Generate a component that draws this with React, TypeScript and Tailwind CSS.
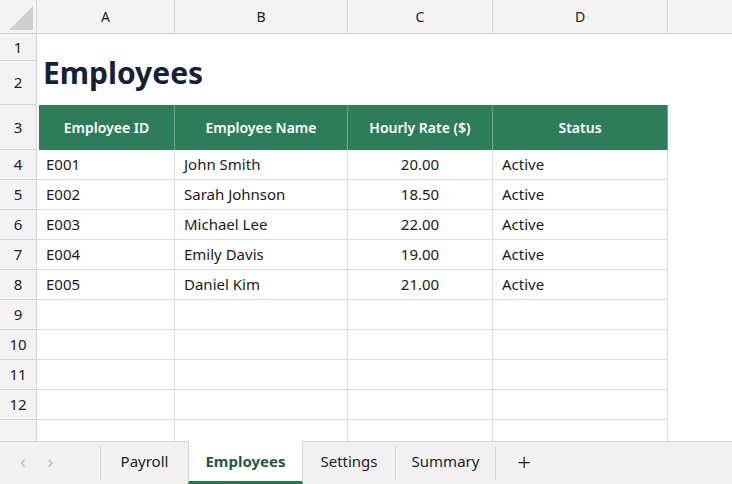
import React from "react";

const cols = [138, 173, 145, 175];
const letters = ["A", "B", "C", "D"];
const data = [
  ["E001", "John Smith", "20.00", "Active"],
  ["E002", "Sarah Johnson", "18.50", "Active"],
  ["E003", "Michael Lee", "22.00", "Active"],
  ["E004", "Emily Davis", "19.00", "Active"],
  ["E005", "Daniel Kim", "21.00", "Active"],
];

function RowNum({ n, h }: { n: string; h: number }) {
  return (
    <div
      className="w-[37px] shrink-0 bg-[#f3f3f3] border-b border-r border-[#d6d6d6] flex items-center justify-center text-[15px] text-[#222]"
      style={{ height: h }}
    >
      {n}
    </div>
  );
}

export default function App() {
  return (
    <div
      className="w-[732px] h-[484px] bg-white overflow-hidden flex flex-col"
      style={{ fontFamily: '"Noto Sans", "Open Sans", sans-serif' }}
    >
      <div className="flex-1 overflow-hidden">
        <div className="flex h-[34px] bg-[#f3f3f3] border-b border-[#d0d0d0]">
          <div className="w-[37px] shrink-0 border-r border-[#d6d6d6] relative">
            <div className="absolute right-[3px] bottom-[3px] w-0 h-0 border-l-[24px] border-l-transparent border-b-[24px] border-b-[#cfcfcf]" />
          </div>
          {cols.map((w, i) => (
            <div key={i} className="shrink-0 border-r border-[#d6d6d6] flex items-center justify-center text-[14px] text-[#222]" style={{ width: w }}>
              {letters[i]}
            </div>
          ))}
          <div className="flex-1" />
        </div>
        <div className="flex">
          <RowNum n="1" h={27} />
          <div className="flex-1" />
        </div>
        <div className="flex">
          <RowNum n="2" h={44} />
          <div className="flex-1 flex items-start pl-[6px]">
            <span className="text-[30px] font-bold text-[#172136] leading-[30px] -mt-[3px]">Employees</span>
          </div>
        </div>
        <div className="flex">
          <RowNum n="3" h={45} />
          <div className="w-[2px]" />
          {["Employee ID", "Employee Name", "Hourly Rate ($)", "Status"].map((t, i) => (
            <div key={i} className="shrink-0 bg-[#2e7d5a] border-r border-[#6aa88a] h-[45px] flex items-center justify-center text-white font-semibold text-[14px]" style={{ width: i === 0 ? cols[0] - 2 : cols[i] }}>
              {t}
            </div>
          ))}
        </div>
        {Array.from({ length: 10 }).map((_, r) => {
          const d = data[r];
          return (
            <div key={r} className="flex">
              <RowNum n={r < 9 ? String(r + 4) : ""} h={30} />
              {cols.map((w, i) => (
                <div
                  key={i}
                  className={`shrink-0 h-[30px] border-r border-b border-[#dcdcdc] flex items-center text-[15px] text-[#1a1a1a] ${i === 2 ? "justify-center" : "px-[9px]"}`}
                  style={{ width: w }}
                >
                  {d ? d[i] : ""}
                </div>
              ))}
            </div>
          );
        })}
      </div>
      <div className="h-[43px] shrink-0 bg-[#f1f1f1] border-t border-[#d6d6d6] flex items-stretch text-[15px] text-[#222]">
        <div className="w-[100px] flex items-center gap-[22px] pl-[20px] pb-[3px] text-[#bbb] text-[18px]">
          <span>‹</span>
          <span>›</span>
        </div>
        <div className="w-px bg-[#d6d6d6] my-[4px]" />
        <div className="w-[87px] flex items-center justify-center pb-[3px]">Payroll</div>
        <div className="w-[115px] bg-white flex items-center justify-center font-bold text-[#1e5a3c] border-b-[3px] border-[#1f7a4a] -mt-px border-x border-x-[#d6d6d6]">
          Employees
        </div>
        <div className="w-[92px] flex items-center justify-center pb-[3px]">Settings</div>
        <div className="w-px bg-[#d6d6d6] my-[4px]" />
        <div className="w-[99px] flex items-center justify-center pb-[3px]">Summary</div>
        <div className="w-px bg-[#d6d6d6] my-[4px]" />
        <div className="w-[56px] flex items-center justify-center text-[24px] font-light pb-[3px]">+</div>
      </div>
    </div>
  );
}
